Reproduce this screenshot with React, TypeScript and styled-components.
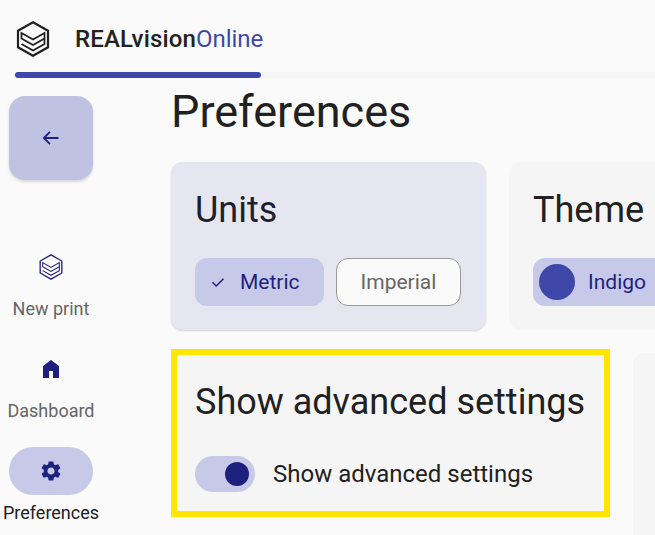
import React from "react";
import styled, { createGlobalStyle } from "styled-components";

const Global = createGlobalStyle`
  html, body { margin: 0; padding: 0; height: 100%; background: #fafafa; }
  body { font-family: Roboto, "Liberation Sans", sans-serif; color: #212121; }
  #root { height: 100%; }
`;

const Page = styled.div`
  width: 655px;
  height: 535px;
  overflow: hidden;
  background: #fafafa;
  display: flex;
  flex-direction: column;
`;

const TopBar = styled.header`
  height: 72px;
  flex: none;
  display: flex;
  align-items: center;
  padding: 6px 0 0 15px;
  box-sizing: border-box;
`;

const LogoSlot = styled.div`
  width: 60px;
  display: flex;
`;

const Brand = styled.div`
  font-size: 24px;
  line-height: 32px;
  font-weight: 500;
  color: #212121;
  letter-spacing: 0.14px;
`;

const BrandAccent = styled.span`
  font-weight: 400;
  color: #3f47a9;
  letter-spacing: 0;
`;

const Track = styled.div`
  flex: none;
  height: 6px;
  margin-left: 15px;
  background: #f5f5f5;
  border-radius: 3px 0 0 3px;
`;

const Fill = styled.div`
  width: 246px;
  height: 100%;
  background: #3f47a9;
  border-radius: 3px;
`;

const Body = styled.div`
  flex: 1;
  display: flex;
  min-height: 0;
`;

const Rail = styled.nav`
  width: 171px;
  flex: none;
  display: flex;
  flex-direction: column;
  padding: 18px 0 0 9px;
  box-sizing: border-box;
`;

const BackButton = styled.button`
  width: 84px;
  height: 84px;
  flex: none;
  border: none;
  padding: 0;
  border-radius: 16px;
  background: #bfc2e2;
  color: #1f1f7e;
  display: flex;
  align-items: center;
  justify-content: center;
  box-shadow: 0 2px 3px rgba(0, 0, 0, 0.14);
  margin-bottom: 63px;
`;

const NavItem = styled.div<{ $active?: boolean }>`
  width: 84px;
  height: 102px;
  flex: none;
  display: flex;
  flex-direction: column;
  align-items: center;
  color: ${(p) => (p.$active ? "#212121" : "#666666")};
`;

const NavPill = styled.div<{ $active?: boolean }>`
  width: 84px;
  height: 48px;
  flex: none;
  border-radius: 24px;
  background: ${(p) => (p.$active ? "#c7c9e8" : "transparent")};
  color: #1f1f7e;
  display: flex;
  align-items: center;
  justify-content: center;
`;

const NavLabel = styled.span`
  margin-top: 6px;
  font-size: 18px;
  line-height: 24px;
  white-space: nowrap;
`;

const Main = styled.main`
  flex: 1;
  min-width: 0;
  display: flex;
  flex-direction: column;
`;

const Title = styled.h1`
  margin: 8px 0 0;
  font-size: 45px;
  line-height: 52px;
  font-weight: 400;
  color: #212121;
`;

const CardRow = styled.div<{ $top: number }>`
  display: flex;
  align-items: flex-start;
  gap: 23px;
  margin-top: ${(p) => p.$top}px;
  flex: none;
`;

const Card = styled.section<{ $selected?: boolean; $width: number; $height?: number }>`
  width: ${(p) => p.$width}px;
  height: ${(p) => p.$height ?? 168}px;
  flex: none;
  box-sizing: border-box;
  padding: 26px 24px 0;
  border-radius: 12px;
  background: ${(p) => (p.$selected ? "#e6e6f0" : "#f5f5f5")};
  box-shadow: ${(p) => (p.$selected ? "0 1px 2px rgba(0,0,0,0.16)" : "none")};
`;

const HighlightCard = styled.section`
  width: 439px;
  height: 168px;
  flex: none;
  margin: -4px 0;
  box-sizing: border-box;
  padding: 25px 18px 0;
  border: 6px solid #ffe600;
  background: #f5f5f5;
`;

const CardTitle = styled.h2`
  margin: 0;
  font-size: 36px;
  line-height: 44px;
  font-weight: 400;
  color: #212121;
  white-space: nowrap;
`;

const UnitsTitle = styled(CardTitle)`
  color: #1f1f2e;
`;

const Chips = styled.div`
  display: flex;
  gap: 12px;
  margin-top: 26px;
`;

const Chip = styled.div<{ $on?: boolean; $pad: string }>`
  height: 48px;
  box-sizing: border-box;
  display: flex;
  align-items: center;
  padding: ${(p) => p.$pad};
  border-radius: 12px;
  font-size: 21px;
  white-space: nowrap;
  background: ${(p) => (p.$on ? "#c7c9e8" : "#fafafa")};
  color: ${(p) => (p.$on ? "#1f1f7e" : "#666666")};
  border: ${(p) => (p.$on ? "none" : "1px solid #999999")};
`;

const ChipCheck = styled.svg`
  width: 16px;
  height: 16px;
  margin-right: 14px;
`;

const Swatch = styled.span`
  width: 36px;
  height: 36px;
  border-radius: 50%;
  background: #3f47a9;
  margin-right: 13px;
  flex: none;
`;

const SwitchRow = styled.div`
  display: flex;
  align-items: center;
  margin-top: 32px;
  gap: 18px;
`;

const SwitchTrack = styled.div`
  width: 60px;
  height: 36px;
  border-radius: 18px;
  background: #c7c9e8;
  display: flex;
  align-items: center;
  justify-content: flex-end;
  padding-right: 6px;
  box-sizing: border-box;
`;

const SwitchThumb = styled.span`
  width: 24px;
  height: 24px;
  border-radius: 50%;
  background: #1f1f7e;
`;

const SwitchLabel = styled.span`
  font-size: 24px;
  line-height: 32px;
  color: #212121;
  white-space: nowrap;
`;

const Logo = ({ size, weight, color }: { size: number; weight: number; color: string }) => (
  <svg width={size} height={size} viewBox="0 0 36 36" fill="none" stroke={color} strokeWidth={weight} strokeLinejoin="miter">
    <path d="M18 1.2 33 9.7V26.3L18 34.8 3 26.3V9.7Z" />
    <path d="M6.5 12 18 18.5 29.5 12V17.5L18 24 6.5 17.5V12Z" strokeWidth={weight * 0.8} />
    <path d="M29.5 17.5V23L18 29.5 6.5 23" strokeWidth={weight * 0.8} />
  </svg>
);

export default function App() {
  return (
    <Page>
      <Global />
      <TopBar>
        <LogoSlot>
          <Logo size={36} weight={2.2} color="#212121" />
        </LogoSlot>
        <Brand>
          REALvision<BrandAccent>Online</BrandAccent>
        </Brand>
      </TopBar>
      <Track>
        <Fill />
      </Track>
      <Body>
        <Rail>
          <BackButton aria-label="Back">
            <svg width="24" height="24" viewBox="0 0 24 24" fill="none" stroke="currentColor" strokeWidth="1.8">
              <path d="M19.5 12H5M11 5.8 4.8 12l6.2 6.2" />
            </svg>
          </BackButton>
          <NavItem>
            <NavPill>
              <Logo size={26} weight={1.8} color="#1f1f7e" />
            </NavPill>
            <NavLabel>New print</NavLabel>
          </NavItem>
          <NavItem>
            <NavPill>
              <svg width="24" height="24" viewBox="0 -960 960 960" fill="currentColor">
                <path d="M160-120v-480l320-240 320 240v480H560v-280H400v280H160Z" />
              </svg>
            </NavPill>
            <NavLabel>Dashboard</NavLabel>
          </NavItem>
          <NavItem $active>
            <NavPill $active>
              <svg width="24" height="24" viewBox="0 0 24 24" fill="currentColor">
                <path d="M19.14 12.94c.04-.3.06-.61.06-.94 0-.32-.02-.64-.07-.94l2.03-1.58c.18-.14.23-.41.12-.61l-1.92-3.32c-.12-.22-.37-.29-.59-.22l-2.39.96c-.5-.38-1.03-.7-1.62-.94l-.36-2.54c-.04-.24-.24-.41-.48-.41h-3.84c-.24 0-.43.17-.47.41l-.36 2.54c-.59.24-1.13.57-1.62.94l-2.39-.96c-.22-.08-.47 0-.59.22L2.74 8.87c-.12.21-.08.47.12.61l2.03 1.58c-.05.3-.09.63-.09.94s.02.64.07.94l-2.03 1.58c-.18.14-.23.41-.12.61l1.92 3.32c.12.22.37.29.59.22l2.39-.96c.5.38 1.03.7 1.62.94l.36 2.54c.05.24.24.41.48.41h3.84c.24 0 .44-.17.47-.41l.36-2.54c.59-.24 1.13-.56 1.62-.94l2.39.96c.22.08.47 0 .59-.22l1.92-3.32c.12-.22.07-.47-.12-.61l-2.01-1.58zM12 15.6c-1.98 0-3.6-1.62-3.6-3.6s1.62-3.6 3.6-3.6 3.6 1.62 3.6 3.6-1.62 3.6-3.6 3.6z" />
              </svg>
            </NavPill>
            <NavLabel>Preferences</NavLabel>
          </NavItem>
        </Rail>
        <Main>
          <Title>Preferences</Title>
          <CardRow $top={24}>
            <Card $selected $width={315}>
              <UnitsTitle>Units</UnitsTitle>
              <Chips>
                <Chip $on $pad="0 24px 0 15px">
                  <ChipCheck viewBox="0 0 16 16" fill="none" stroke="currentColor" strokeWidth="1.5">
                    <path d="M2.5 8.3 6.2 12 13.5 4.7" />
                  </ChipCheck>
                  Metric
                </Chip>
                <Chip $pad="0 24px">Imperial</Chip>
              </Chips>
            </Card>
            <Card $width={400}>
              <CardTitle>Theme</CardTitle>
              <Chips>
                <Chip $on $pad="0 24px 0 6px">
                  <Swatch />
                  Indigo
                </Chip>
              </Chips>
            </Card>
          </CardRow>
          <CardRow $top={23}>
            <HighlightCard>
              <CardTitle>Show advanced settings</CardTitle>
              <SwitchRow>
                <SwitchTrack>
                  <SwitchThumb />
                </SwitchTrack>
                <SwitchLabel>Show advanced settings</SwitchLabel>
              </SwitchRow>
            </HighlightCard>
            <Card $width={200} $height={220} />
          </CardRow>
        </Main>
      </Body>
    </Page>
  );
}
